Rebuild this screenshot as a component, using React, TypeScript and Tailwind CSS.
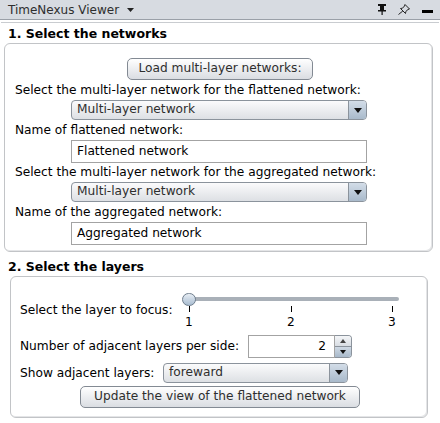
import React from "react";

const font = { fontFamily: '"DejaVu Sans", "Liberation Sans", sans-serif' };

const DownArrow = () => (
  <svg width="8" height="5" viewBox="0 0 8 5">
    <path d="M0 0 H8 L4 5 Z" fill="#111" />
  </svg>
);

const Combo: React.FC<{ label: string; className: string }> = ({ label, className }) => (
  <div
    className={`flex h-[20px] rounded-[4px] border border-[#8b939c] bg-gradient-to-b from-[#fbfbfc] to-[#dde0e4] ${className}`}
  >
    <div className="flex-1 pl-[5px] text-[12.2px] leading-[17px] text-[#2e2e2e]">{label}</div>
    <div className="w-[18px] flex items-center justify-center rounded-r-[3px] border-l border-[#8b939c] bg-gradient-to-b from-[#d3dde8] to-[#a9bacb]">
      <DownArrow />
    </div>
  </div>
);

const TextField: React.FC<{ value: string }> = ({ value }) => (
  <div className="w-[296px] h-[23px] ml-[66px] border border-[#a3a3a3] bg-white pl-[5px] pt-[2px] text-[12.2px] leading-[17px]">
    {value}
  </div>
);

const PushButton: React.FC<{ label: string; className: string }> = ({ label, className }) => (
  <div
    className={`h-[22px] rounded-[5px] border border-[#838a93] bg-gradient-to-b from-[#ffffff] to-[#dadde2] text-center pt-[1px] text-[12.2px] leading-[17px] text-[#2e2e2e] ${className}`}
  >
    {label}
  </div>
);

export default function App() {
  return (
    <div className="w-[440px] h-[423px] bg-white overflow-hidden text-black" style={font}>
      {/* title bar */}
      <div className="h-[20px] bg-[#d7dbe1] border-b border-[#9aa0a8] flex items-center pl-[8px] pr-[7px]">
        <span className="text-[12px] leading-[16px] text-[#2e2e2e]">TimeNexus Viewer</span>
        <svg className="ml-[8px]" width="7" height="4" viewBox="0 0 7 4">
          <path d="M0 0 H7 L3.5 4 Z" fill="#222" />
        </svg>
        <div className="ml-auto flex items-center gap-[12px]">
          <svg width="8" height="11" viewBox="0 0 8 11">
            <rect x="0" y="0" width="8" height="2" fill="#111" />
            <rect x="2" y="2" width="4" height="4" fill="#111" />
            <rect x="0" y="6" width="8" height="1.5" fill="#111" />
            <rect x="3.5" y="7" width="1.2" height="4" fill="#111" />
          </svg>
          <svg width="12" height="11" viewBox="0 0 12 11">
            <path
              d="M7 0.5 L11.5 5 L10 5.5 L7.8 7.5 L7.5 9.5 L2.5 4.5 L4.5 4.2 L6.5 2 Z M4.8 7 L0.5 10.5"
              fill="none"
              stroke="#222"
              strokeWidth="1"
            />
          </svg>
          <div className="w-[11px] h-[3px] bg-black mt-[4px]" />
        </div>
      </div>
      <div className="h-[2px]" />
      <div className="h-px bg-[#c9ccd0] mx-px" />

      {/* 1. Select the networks */}
      <div className="pl-[8px] pt-[3px] h-[20px] text-[12.5px] font-bold leading-[16px]">1. Select the networks</div>
      <div className="ml-[4px] w-[429px] h-[209px] rounded-[6px] border border-[#c2c4c7] shadow-[inset_-1px_-1px_0_#e4e5e7] pt-[14px] text-[12.2px]">
        <PushButton label="Load multi-layer networks:" className="w-[186px] h-[21px] ml-[122px]" />
        <div className="h-[20px] leading-[20px] pl-[10px]">Select the multi-layer network for the flattened network:</div>
        <Combo label="Multi-layer network" className="w-[296px] ml-[66px]" />
        <div className="h-[20px] leading-[20px] pl-[10px]">Name of flattened network:</div>
        <TextField value="Flattened network" />
        <div className="h-[19px] leading-[19px] pl-[10px]">Select the multi-layer network for the aggregated network:</div>
        <Combo label="Multi-layer network" className="w-[296px] ml-[66px]" />
        <div className="h-[20px] leading-[20px] pl-[10px]">Name of the aggregated network:</div>
        <TextField value="Aggregated network" />
      </div>

      {/* 2. Select the layers */}
      <div className="pl-[8px] pt-[7px] h-[24px] text-[12.5px] font-bold leading-[16px]">2. Select the layers</div>
      <div className="ml-[10px] w-[418px] h-[142px] rounded-[6px] border border-[#c2c4c7] shadow-[inset_-1px_-1px_0_#e4e5e7] text-[12.2px]">
        <div className="flex pt-[16px] pl-[9px] h-[56px]">
          <div className="w-[162px] pt-[7px] leading-[20px]">Select the layer to focus:</div>
          <div className="relative w-[217px] h-[40px]">
            <div className="absolute left-[2px] right-0 top-[4px] h-[4px] rounded-full bg-[#a9b0b8]" />
            <div className="absolute left-0 top-0 w-[14px] h-[13px] rounded-full border border-[#6f7e8e] bg-gradient-to-b from-[#e8eef4] to-[#a9bdd1]" />
            {[
              { x: 7, t: "1" },
              { x: 109, t: "2" },
              { x: 210, t: "3" },
            ].map((k) => (
              <div key={k.t} className="absolute top-[13px] flex flex-col items-center w-[12px]" style={{ left: k.x - 6 }}>
                <div className="w-px h-[6px] bg-black" />
                <div className="leading-[16px] mt-[2px]">{k.t}</div>
              </div>
            ))}
          </div>
        </div>
        <div className="flex items-center pl-[9px] h-[24px] mt-[1px]">
          <div className="w-[228px] leading-[18px]">Number of adjacent layers per side:</div>
          <div className="w-[87px] h-[23px] border border-[#a3a3a3] bg-white text-right pr-[8px] pt-[2px] leading-[17px]">2</div>
          <div className="w-[17px] h-[23px] flex flex-col rounded-r-[4px] border border-l-0 border-[#8b939c] overflow-hidden">
            <div className="flex-1 flex items-center justify-center border-b border-[#8b939c] bg-gradient-to-b from-[#f4f6f8] to-[#d8dde3]">
              <svg width="6" height="4" viewBox="0 0 6 4"><path d="M0 4 H6 L3 0 Z" fill="#444" /></svg>
            </div>
            <div className="flex-1 flex items-center justify-center bg-gradient-to-b from-[#cfd9e4] to-[#a8b9ca]">
              <svg width="6" height="4" viewBox="0 0 6 4"><path d="M0 0 H6 L3 4 Z" fill="#111" /></svg>
            </div>
          </div>
        </div>
        <div className="flex items-center pl-[9px] h-[19px] mt-[5px]">
          <div className="w-[143px] leading-[18px]">Show adjacent layers:</div>
          <Combo label="foreward" className="w-[185px] h-[19px]" />
        </div>
        <PushButton label="Update the view of the flattened network" className="w-[280px] ml-[69px] mt-[4px]" />
      </div>
    </div>
  );
}
